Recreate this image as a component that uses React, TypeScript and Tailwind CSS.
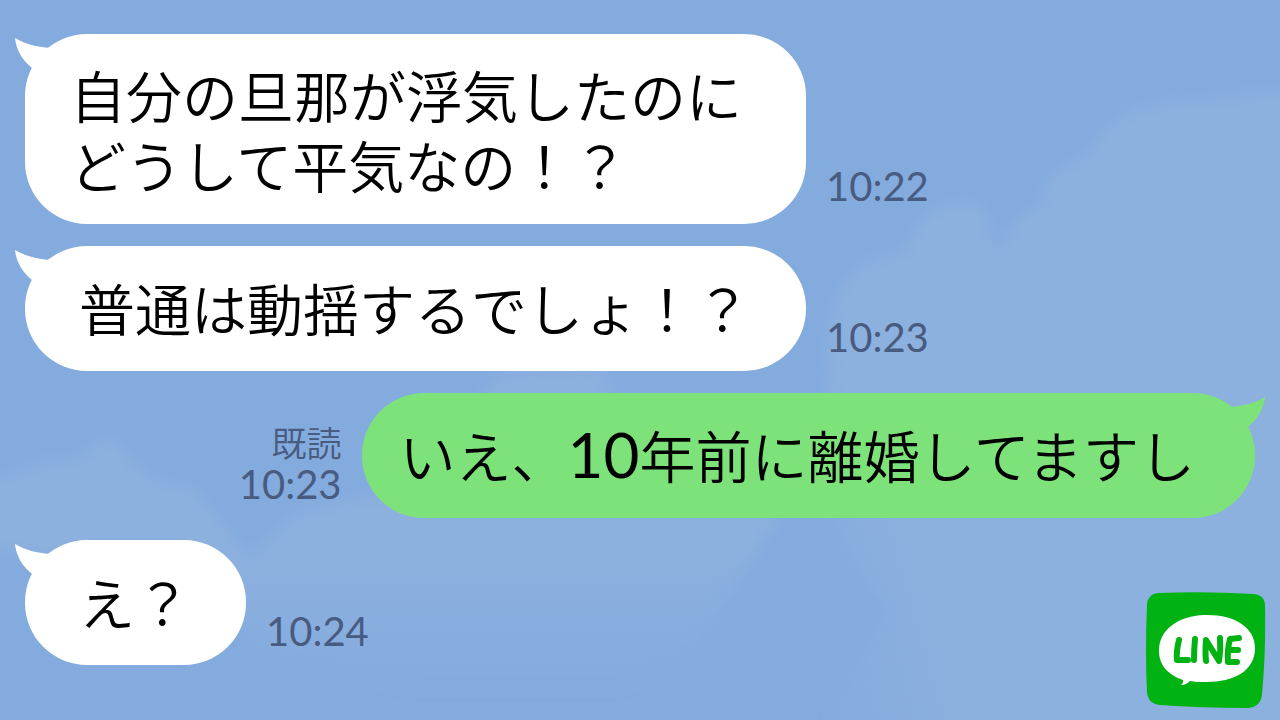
import clsx from 'clsx';

type Message = {
    id: number;
    mine?: boolean;
    read?: boolean;
    time: string;
    lines: string[];
};

const messages: Message[] = [
    { id: 1, time: '10:22', lines: ['自分の旦那が浮気したのに', 'どうして平気なの！？'] },
    { id: 2, time: '10:23', lines: ['普通は動揺するでしょ！？'] },
    { id: 3, time: '10:23', mine: true, read: true, lines: ['いえ、10年前に離婚してますし'] },
    { id: 4, time: '10:24', lines: ['え？'] },
];

function Sky() {
    return (
        <svg
            className="absolute inset-0 h-full w-full"
            viewBox="0 0 1280 720"
            preserveAspectRatio="none"
            aria-hidden="true"
        >
            <defs>
                <filter id="soft" x="-10%" y="-10%" width="120%" height="120%">
                    <feGaussianBlur stdDeviation="8" />
                </filter>
                <linearGradient id="fade" x1="0" y1="430" x2="0" y2="690" gradientUnits="userSpaceOnUse">
                    <stop offset="0.4" stopColor="#8db1de" />
                    <stop offset="1" stopColor="#8db1de" stopOpacity="0" />
                </linearGradient>
                <linearGradient id="edge" x1="820" y1="600" x2="960" y2="560" gradientUnits="userSpaceOnUse">
                    <stop offset="0" stopColor="#8db1de" stopOpacity="0.3" />
                    <stop offset="1" stopColor="#8db1de" />
                </linearGradient>
            </defs>
            <g filter="url(#soft)">
                <path
                    fill="#8db1de"
                    d="M825 500 L832 315 Q850 250 905 255 Q920 198 975 203 Q992 215 996 262 Q1010 215 1040 208 Q1045 165 1090 155 Q1110 105 1180 102 L1300 90 L1300 500 Z"
                />
                <path fill="url(#edge)" d="M825 490 L1300 490 L1300 740 L830 740 Q850 660 890 610 Q850 570 825 490 Z" />
                <path
                    fill="url(#fade)"
                    d="M-20 490 Q10 470 48 461 Q80 462 92 448 Q112 425 128 458 Q150 484 190 486 Q215 515 250 558 Q275 530 300 512 Q350 495 400 495 L500 375 L600 365 L640 480 L780 510 Q740 580 700 640 L620 690 L420 690 L260 650 L200 580 L-20 545 Z"
                />
            </g>
        </svg>
    );
}

function Tail({ mine }: { mine?: boolean }) {
    return (
        <svg
            className={clsx('absolute', mine ? '-right-[10px] top-0 -scale-x-100 text-[#7de27a]' : '-left-[10px] top-0 text-white')}
            width="50"
            height="50"
            viewBox="0 0 50 50"
            fill="currentColor"
            aria-hidden="true"
        >
            <path d="M0 4 C10 10 22 13 35 14 L40 40 L17 34 C7 26 1 15 0 4 Z" />
        </svg>
    );
}

// Latin digits get their own face inside the Japanese text
function Line({ text }: { text: string }) {
    return (
        <span className="block">
            {text.split(/(\d+)/).map((part, i) =>
                /\d/.test(part) ? (
                    <span key={i} className="font-['Lato',sans-serif] text-[62px] leading-none font-normal">{part}</span>
                ) : (
                    part
                )
            )}
        </span>
    );
}

function LineLogo() {
    return (
        <svg width="120" height="118" viewBox="0 0 120 118" role="img" aria-label="LINE">
            <path d="M12 1 Q60 -1 108 2 Q119 3 119 14 Q120 60 116 102 Q115 115 102 116 Q55 116 14 113 Q2 112 1 100 Q-1 60 1 12 Q2 2 12 1 Z" fill="#00b212" />
            <path d="M58 23 C88 22 109 35 109 56 C109 79 88 90 60 90 C54 90 48 90 44 89 C42 91 39 93 35 93 Q38 90 37 88 C23 83 13 74 13 59 C13 37 33 24 58 23 Z" fill="#fff" />
            <g fill="none" stroke="#00b212" strokeWidth="6" strokeLinecap="round" strokeLinejoin="round">
                <path d="M33 48 Q30 60 31 68 L42 68" />
                <path d="M49 47 Q48 58 48 68" />
                <path d="M60 69 Q59 60 60 48 L73 69 Q75 58 74 46" />
                <path d="M93 46 L84 47 Q81 58 82 70 L91 70 M83 58 L92 58" />
            </g>
        </svg>
    );
}

export default function App() {
    return (
        <div className="relative min-h-screen overflow-hidden bg-[#84abde] font-['Noto_Sans_CJK_JP',sans-serif] font-[350]">
            <Sky />

            {/* Conversación */}
            <main className="relative flex flex-col gap-[22px] pt-[34px] pr-[25px] pb-14 pl-[25px]">
                {messages.map((msg) => {
                    const multiline = msg.lines.length > 1;
                    return (
                        <div key={msg.id} className={clsx('flex items-end gap-5', msg.mine && 'flex-row-reverse')}>
                            <div
                                className={clsx(
                                    'relative rounded-[62px] text-[56px] leading-[70px] whitespace-nowrap text-black',
                                    msg.mine ? 'bg-[#7de27a] pr-[60px] pl-[38px]' : 'bg-white',
                                    !msg.mine && (multiline ? 'pr-16 pl-[45px]' : 'pr-[55px] pl-[54px]'),
                                    multiline ? 'py-[25px]' : 'pt-[26px] pb-[29px]'
                                )}
                            >
                                <Tail mine={msg.mine} />
                                <p className="relative">
                                    {msg.lines.map((line) => (
                                        <Line key={line} text={line} />
                                    ))}
                                </p>
                            </div>
                            <div className={clsx('flex flex-col items-end text-[#485b80]', multiline ? 'pb-4' : 'pb-3')}>
                                {msg.read && <span className="text-[35px] leading-[43px]">既読</span>}
                                <time className="font-['Lato',sans-serif] text-[40px] leading-[43px] font-normal">{msg.time}</time>
                            </div>
                        </div>
                    );
                })}
            </main>

            <div className="absolute right-[14px] bottom-[11px]">
                <LineLogo />
            </div>
        </div>
    );
}
